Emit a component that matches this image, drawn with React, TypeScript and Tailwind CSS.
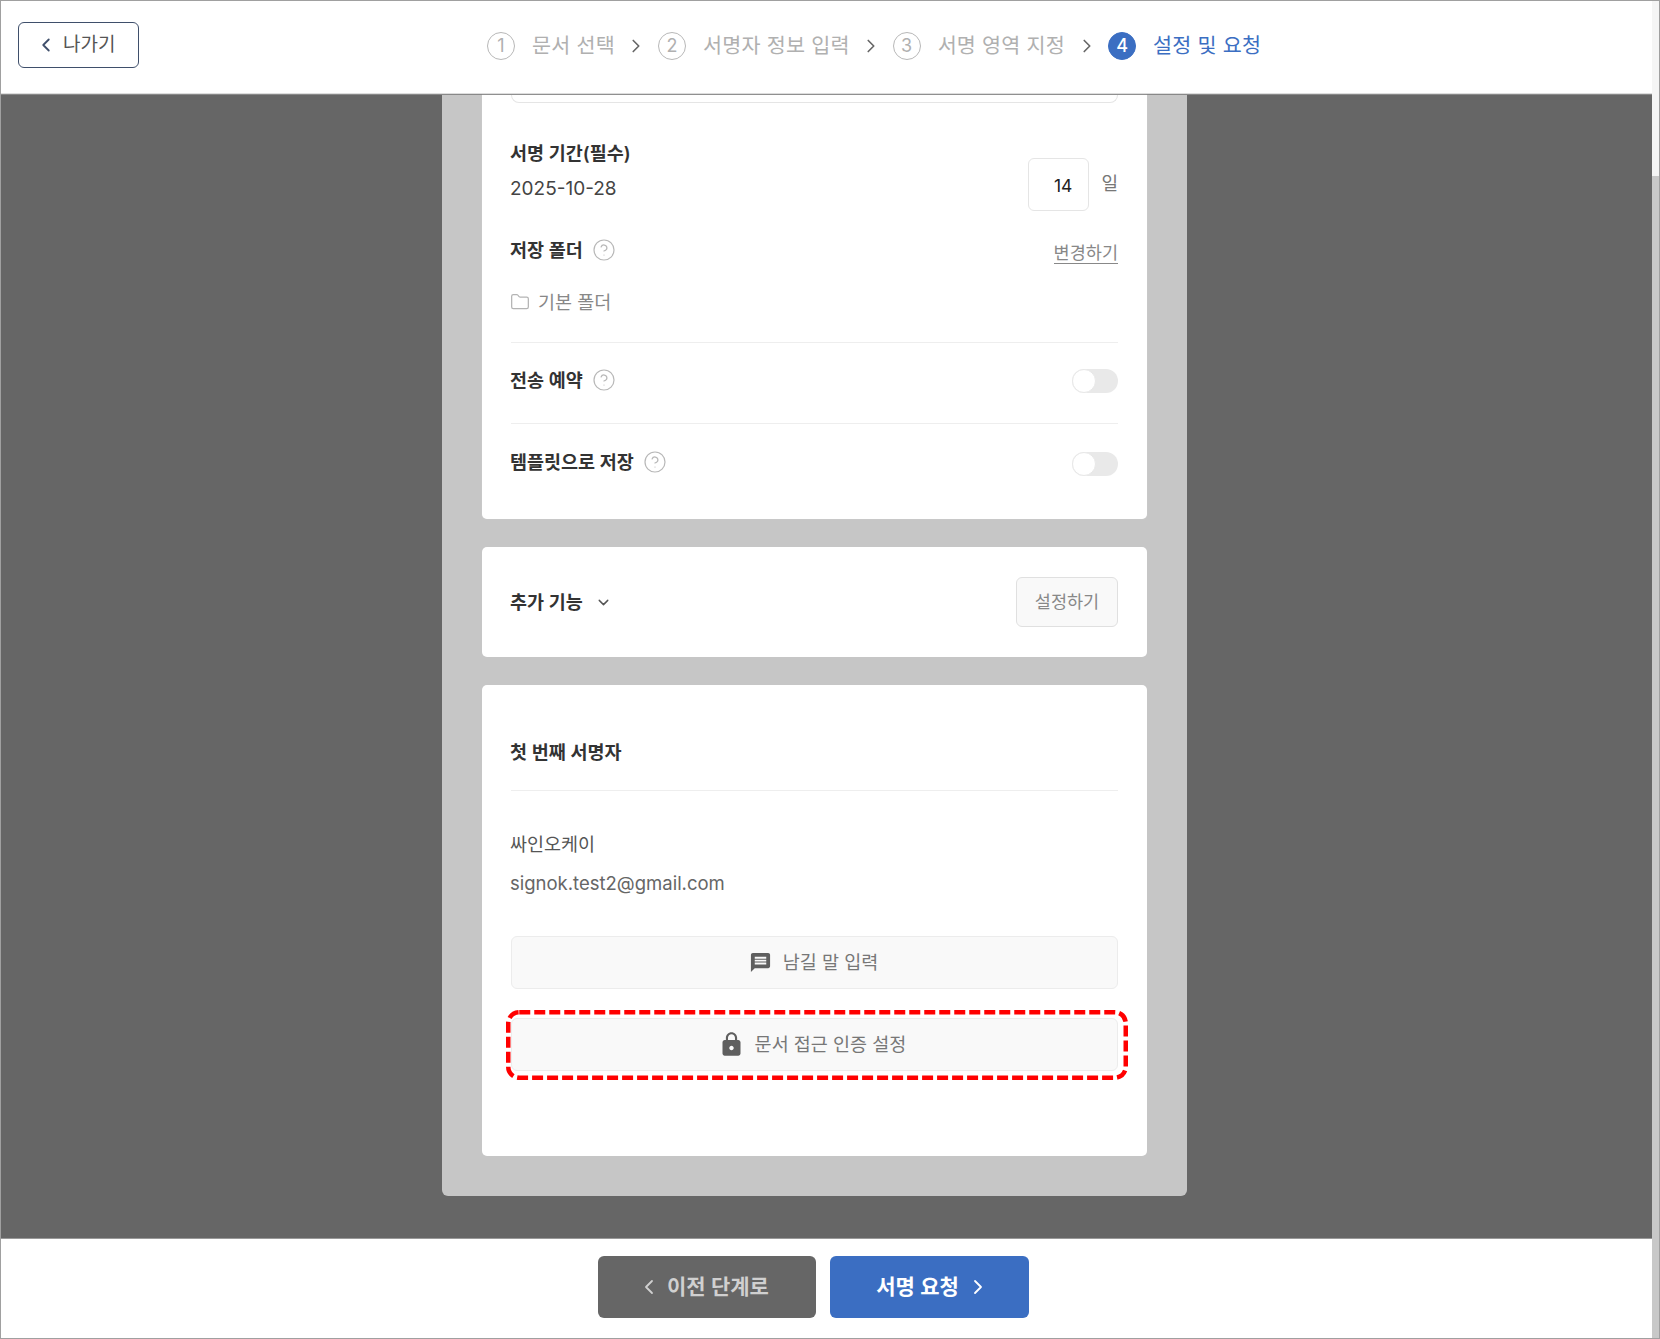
import { ChevronDown, ChevronLeft, ChevronRight, CircleHelp, Folder } from "lucide-react";
import { MdLock, MdMessage } from "react-icons/md";

const font = "[font-family:Inter,'Noto_Sans_CJK_KR',sans-serif]";

function Step({ n, label, active }: { n: number; label: string; active?: boolean }) {
  return (
    <div className="flex items-center">
      <span
        className={
          active
            ? "flex h-[28px] w-[28px] items-center justify-center rounded-full border border-[#3b6ec2] bg-[#3b6ec2] text-[18px] font-medium leading-none text-white"
            : "flex h-[28px] w-[28px] items-center justify-center rounded-full border border-[#b8b8b8] text-[18px] leading-none text-[#b0b0b0]"
        }
      >
        {n}
      </span>
      <span
        className={
          active
            ? "ml-[17px] pb-[1px] text-[20.7px] leading-[28px] tracking-[0.2px] text-[#3b6ec2]"
            : "ml-[17px] pb-[1px] text-[20.7px] leading-[28px] tracking-[0.2px] text-[#b0b0b0]"
        }
      >
        {label}
      </span>
    </div>
  );
}

function Arrow() {
  return <ChevronRight className="mx-[10.5px] h-[22px] w-[22px] text-[#666666]" strokeWidth={1.8} />;
}

function Help() {
  return <CircleHelp className="ml-[9px] h-[24px] w-[24px] text-[#b8b8b8]" strokeWidth={1.2} />;
}

function Toggle() {
  return (
    <div className="flex h-[24px] w-[46px] items-center rounded-full bg-[#e9e9e9]">
      <span className="h-[24px] w-[24px] rounded-full border border-[#e8e8e8] bg-white" />
    </div>
  );
}

const label = "-ml-px text-[18.5px] font-semibold leading-[26px] text-[#333333]";

export default function App() {
  return (
    <div className={`${font} flex h-[1339px] w-[1660px] overflow-hidden border border-[#a0a0a0] bg-white`}>
      <div className="flex min-w-0 flex-1 flex-col">
        <header className="flex h-[93px] shrink-0 items-center border-b border-[#dddddd] bg-white pb-[2px]">
          <button className="mb-[2px] ml-[17px] flex h-[46px] w-[121px] items-center rounded-[6px] border-[1.5px] border-[#3f4f6b] pl-[16px] text-[19px] text-[#555555]">
            <ChevronLeft className="h-[22px] w-[22px] text-[#3f4f6b]" strokeWidth={2} />
            <span className="ml-[6px]">나가기</span>
          </button>
          <nav className="ml-[348px] flex items-center">
            <Step n={1} label="문서 선택" />
            <Arrow />
            <Step n={2} label="서명자 정보 입력" />
            <Arrow />
            <Step n={3} label="서명 영역 지정" />
            <Arrow />
            <Step n={4} label="설정 및 요청" active />
          </nav>
        </header>

        <main className="min-h-0 flex-1 border-t border-[#888888] bg-[#666666]">
          <div className="ml-[441px] h-[1101px] w-[745px] rounded-b-[6px] bg-[#c6c6c6] px-[40px]">
            <section className="h-[424px] rounded-b-[5px] bg-white px-[29px] shadow-[0_0_1px_#dddddd]">
              <div className="h-[8px] rounded-b-[8px] border border-t-0 border-[#e5e5e5]" />
              <div className="mt-[37px] flex items-start justify-between">
                <div>
                  <div className={label}>서명 기간(필수)</div>
                  <div className="-ml-px mt-[10px] text-[19px] leading-[26px] text-[#444444]">2025-10-28</div>
                </div>
                <div className="mt-[18px] flex items-start">
                  <div className="flex h-[53px] w-[61px] items-center justify-end rounded-[6px] border border-[#e5e5e5] pr-[16px] pt-[3px] text-[17.5px] text-[#222222]">
                    14
                  </div>
                  <span className="ml-[12px] mt-[13px] text-[18px] leading-[26px] text-[#777777]">일</span>
                </div>
              </div>
              <div className="mt-[25px] flex items-center justify-between">
                <div className="flex items-center">
                  <span className={label}>저장 폴더</span>
                  <Help />
                </div>
                <span className="mt-[6px] border-b border-[#888888] text-[17.5px] leading-[21px] text-[#888888]">변경하기</span>
              </div>
              <div className="mt-[25px] flex items-center">
                <Folder className="ml-[-1px] h-[20px] w-[20px] text-[#b4b4b4]" strokeWidth={1.5} />
                <span className="ml-[8px] text-[18.5px] leading-[26px] text-[#888888]">기본 폴더</span>
              </div>
              <div className="mt-[27px] flex h-[81px] items-center justify-between border-t border-[#eeeeee] pb-[4px]">
                <div className="flex items-center pb-[2px]">
                  <span className={label}>전송 예약</span>
                  <Help />
                </div>
                <Toggle />
              </div>
              <div className="flex h-[81px] items-center justify-between border-t border-[#eeeeee]">
                <div className="flex items-center pb-[4px]">
                  <span className={label}>템플릿으로 저장</span>
                  <Help />
                </div>
                <Toggle />
              </div>
            </section>

            <section className="mt-[28px] flex h-[110px] items-center justify-between rounded-[5px] bg-white px-[29px]">
              <div className="flex items-center">
                <span className={label}>추가 기능</span>
                <ChevronDown className="ml-[12px] h-[17px] w-[17px] text-[#555555]" strokeWidth={2} />
              </div>
              <button className="h-[50px] w-[102px] rounded-[6px] border border-[#e0e0e0] bg-[#f9f9f9] text-[17.5px] text-[#888888]">
                설정하기
              </button>
            </section>

            <section className="mt-[28px] h-[471px] rounded-[5px] bg-white px-[29px]">
              <div className="flex h-[106px] items-end border-b border-[#eeeeee] pb-[25px]">
                <span className={label}>첫 번째 서명자</span>
              </div>
              <div className="-ml-px mt-[40px] text-[18.5px] leading-[26px] text-[#555555]">싸인오케이</div>
              <div className="-ml-px mt-[13px] text-[18.5px] leading-[26px] text-[#666666]">signok.test2@gmail.com</div>
              <button className="mt-[40px] flex h-[53px] w-full items-center justify-center rounded-[6px] border border-[#ececec] bg-[#f9f9f9] pr-[2px] text-[18.5px] text-[#777777]">
                <MdMessage className="mr-[11px] h-[23px] w-[23px] text-[#5f5f5f]" />
                <span className="pt-[1px]">남길 말 입력</span>
              </button>
              <div className="relative mt-[29px]">
                <button className="flex h-[53px] w-full items-center justify-center rounded-[6px] border border-[#ececec] bg-[#f9f9f9] pr-[5px] text-[18.5px] text-[#777777]">
                  <MdLock className="mr-[10px] h-[27px] w-[27px] text-[#5f5f5f]" />
                  <span>문서 접근 인증 설정</span>
                </button>
                <svg className="absolute left-[-5px] top-[-8px]" width="622" height="70" fill="none">
                  <rect x="2.25" y="2.25" width="617.5" height="65.5" rx="11" stroke="#ff0000" strokeWidth="4.5" strokeDasharray="11 4" />
                </svg>
              </div>
            </section>
          </div>
        </main>

        <footer className="flex h-[100px] shrink-0 items-start border-t border-[#999999] bg-white pl-[597px] pt-[17px]">
          <button className="flex h-[62px] w-[218px] items-center justify-center rounded-[6px] bg-[#666666] pr-[8px] text-[21px] font-semibold text-[#d0d0d0]">
            <ChevronLeft className="mr-[6px] h-[24px] w-[24px]" strokeWidth={1.8} />
            <span className="pb-[1px]">이전 단계로</span>
          </button>
          <button className="ml-[14px] flex h-[62px] w-[199px] items-center justify-center rounded-[6px] bg-[#3b6ec2] pl-[7px] text-[21px] font-semibold text-white">
            <span className="pb-[1px]">서명 요청</span>
            <ChevronRight className="ml-[7px] h-[24px] w-[24px]" strokeWidth={1.8} />
          </button>
        </footer>
      </div>

      <div className="flex w-[7px] shrink-0 flex-col">
        <div className="h-[175px] bg-[#f5f5f5]" />
        <div className="flex-1 bg-[#c8c8c8]" />
      </div>
    </div>
  );
}
